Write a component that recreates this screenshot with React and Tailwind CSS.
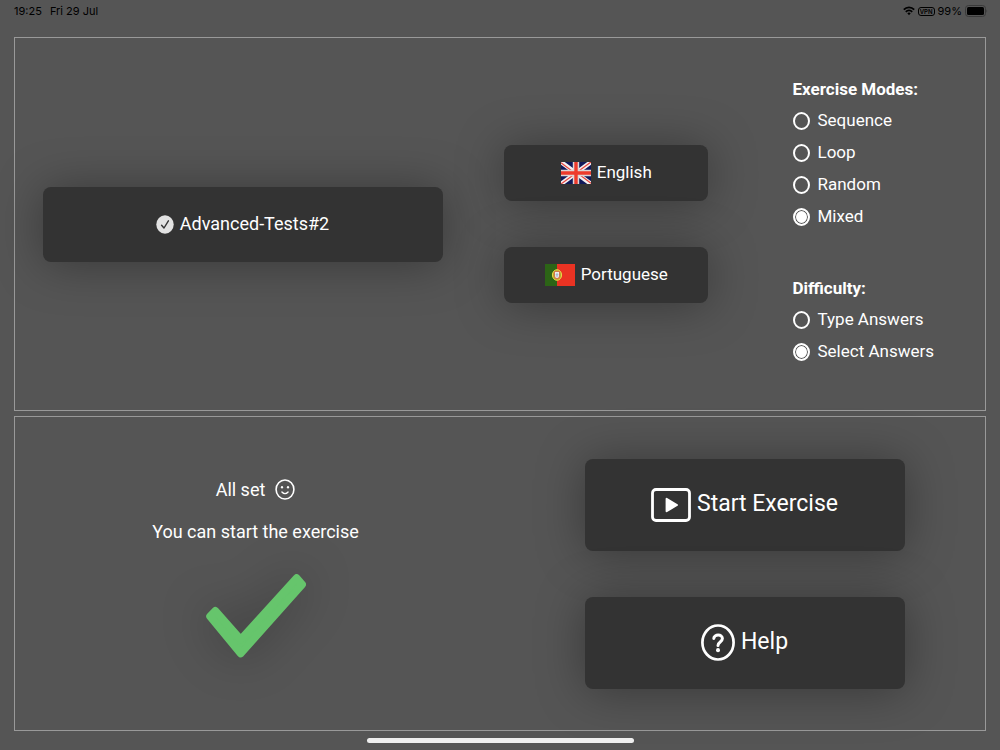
import React, { useState } from "react";

const MODES = ["Sequence", "Loop", "Random", "Mixed"];
const DIFFICULTIES = ["Type Answers", "Select Answers"];

const buttonStyle =
  "flex max-w-full items-center justify-center gap-[6px] rounded-lg bg-[#333333] shadow-[0_2px_48px_rgba(0,0,0,0.35)]";

function WifiIcon() {
  return (
    <svg width="12" height="10" viewBox="0 0 12 10" fill="none" stroke="#000" strokeWidth="1.8" aria-hidden="true">
      <path d="M0.8 3.6C3.7 0.6 8.3 0.6 11.2 3.6" />
      <path d="M2.8 5.8C4.6 4 7.4 4 9.2 5.8" />
      <path d="M4.3 7.3Q6 5.9 7.7 7.3L6 9.3Z" fill="#000" stroke="none" />
    </svg>
  );
}

function BatteryIcon() {
  return (
    <svg width="23" height="12" viewBox="0 0 23 12" aria-hidden="true">
      <rect x="0.5" y="0.5" width="20" height="11" rx="3" fill="none" stroke="#3a3a3a" />
      <rect x="2" y="2" width="17" height="8" rx="1.5" fill="#000" />
      <path d="M21.5 4.2Q23 6 21.5 7.8Z" fill="#3a3a3a" />
    </svg>
  );
}

function SelectedIcon() {
  return (
    <svg width="18" height="19" viewBox="0 0 18 19" aria-hidden="true">
      <ellipse cx="9" cy="9.5" rx="8.7" ry="9.3" fill="#e2e2e2" />
      <path d="M5.6 10.2L8 13L12.4 5.8" fill="none" stroke="#333" strokeWidth="1.4" strokeLinecap="round" strokeLinejoin="round" />
    </svg>
  );
}

function UkFlag() {
  return (
    <svg width="30" height="22" viewBox="0 0 30 22" aria-hidden="true">
      <rect width="30" height="22" fill="#10195a" />
      <path d="M0 0L30 22M30 0L0 22" stroke="#f4f0f0" strokeWidth="4.4" />
      <path d="M0 .8L13 10.4M30 21.2L17 11.6M30 0L17 9.6M0 22L13 12.4" stroke="#e8433c" strokeWidth="1.2" />
      <path d="M15 0V22M0 11H30" stroke="#ddd6d6" strokeWidth="6.4" />
      <path d="M15 0V22M0 11H30" stroke="#ee3b2c" strokeWidth="3.4" />
    </svg>
  );
}

function PortugalFlag() {
  return (
    <svg width="30" height="22" viewBox="0 0 30 22" aria-hidden="true">
      <rect width="30" height="22" fill="#ea3323" />
      <rect width="12" height="22" fill="#2c6416" />
      <ellipse cx="12" cy="11" rx="4.6" ry="5.3" fill="#b9a52d" stroke="#e9d84a" strokeWidth="1" />
      <path d="M9.2 7.3H14.8V11.8Q14.8 14.8 12 15Q9.2 14.8 9.2 11.8Z" fill="#dc6a58" />
      <path d="M10 8H14V12Q14 13.8 12 14Q10 13.8 10 12Z" fill="#eee" />
      <path d="M12 9V13M10.6 10.8H13.4" stroke="#8ba6c4" strokeWidth="0.8" />
    </svg>
  );
}

function SmileIcon() {
  return (
    <svg width="20" height="21" viewBox="0 0 20 21" aria-hidden="true">
      <ellipse cx="10" cy="10.5" rx="8.9" ry="9.5" fill="none" stroke="#fff" strokeWidth="1.6" />
      <ellipse cx="7" cy="8.2" rx="1.1" ry="1.3" fill="#fff" />
      <ellipse cx="13" cy="8.2" rx="1.1" ry="1.3" fill="#fff" />
      <path d="M6.9 13Q10 16.4 13.1 13" fill="none" stroke="#fff" strokeWidth="1.3" strokeLinecap="round" />
    </svg>
  );
}

function CheckMark() {
  return (
    <svg
      className="drop-shadow-[0_0_24px_rgba(0,0,0,0.35)]"
      width="100"
      height="84"
      viewBox="0 0 100 84"
      role="img"
      aria-label="Ready"
    >
      <path
        d="M9.3 36.8L4 42.4L34.7 79.6L96.2 10.4L90.6 4L34.7 65.6Z"
        fill="#66c56c"
        stroke="#66c56c"
        strokeWidth="7.6"
        strokeLinejoin="round"
      />
    </svg>
  );
}

function PlayIcon() {
  return (
    <svg width="40" height="34" viewBox="0 0 40 34" aria-hidden="true">
      <rect x="1.5" y="1.5" width="37" height="31" rx="3.5" fill="none" stroke="#fff" strokeWidth="2.8" />
      <path d="M15.6 10.8V23.2L26 17Z" fill="#fff" stroke="#fff" strokeWidth="2" strokeLinejoin="round" />
    </svg>
  );
}

function HelpIcon() {
  return (
    <svg width="34" height="37" viewBox="0 0 34 37" fill="none" stroke="#fff" aria-hidden="true">
      <ellipse cx="17" cy="18.5" rx="15.6" ry="17" strokeWidth="2.7" />
      <path d="M12.8 14.4C13 9.9 21.4 9.8 21.4 14.6C21.4 18 17 18 17 21.4" strokeWidth="3" strokeLinecap="round" />
      <ellipse cx="17" cy="26.2" rx="2" ry="2.1" fill="#fff" stroke="none" />
    </svg>
  );
}

function RadioGroup({ title, name, options, value, onChange }) {
  return (
    <fieldset>
      <legend className="h-8 text-[17px] leading-8 font-bold">{title}</legend>
      {options.map((option) => (
        <label key={option} className="flex h-8 items-center gap-2 text-[17px]">
          <input
            type="radio"
            name={name}
            checked={value === option}
            onChange={() => onChange(option)}
            className="h-[18px] w-[17px] shrink-0 appearance-none rounded-[50%] border-2 border-white checked:bg-white checked:shadow-[inset_0_0_0_1px_#555555]"
          />
          {option}
        </label>
      ))}
    </fieldset>
  );
}

function StatusBar() {
  return (
    <header className="flex h-[37px] items-start justify-between pt-[3px] pr-3 pl-[14px] font-[Inter,sans-serif] text-[11px] leading-4 text-black">
      <div className="flex gap-2">
        <span>19:25</span>
        <span>Fri 29 Jul</span>
      </div>
      <div className="flex h-4 items-center gap-[3px]">
        <WifiIcon />
        <span className="rounded-[3px] border border-black px-px text-[6px] leading-[7px] font-semibold">VPN</span>
        <span>99%</span>
        <BatteryIcon />
      </div>
    </header>
  );
}

function App() {
  const [mode, setMode] = useState("Mixed");
  const [difficulty, setDifficulty] = useState("Select Answers");

  return (
    <div className="flex min-h-screen flex-col bg-[#555555] font-[Roboto,sans-serif] text-white">
      <StatusBar />

      <main className="mx-[14px] grid flex-1 grid-rows-[374fr_315fr] gap-[5px]">
        {/* Exercise settings */}
        <section className="grid grid-cols-[456fr_273fr_243fr] items-center border border-[#999999]">
          <div className="flex justify-center">
            <button className={`${buttonStyle} h-[75px] w-[400px] text-lg`}>
              <SelectedIcon />
              Advanced-Tests#2
            </button>
          </div>

          <div className="flex flex-col items-center gap-[46px]">
            <button className={`${buttonStyle} h-14 w-[204px] text-[17px]`}>
              <UkFlag />
              English
            </button>
            <button className={`${buttonStyle} h-14 w-[204px] text-[17px]`}>
              <PortugalFlag />
              Portuguese
            </button>
          </div>

          <div className="flex flex-col gap-[39px] pb-2 pl-[50px]">
            <RadioGroup title="Exercise Modes:" name="mode" options={MODES} value={mode} onChange={setMode} />
            <RadioGroup
              title="Difficulty:"
              name="difficulty"
              options={DIFFICULTIES}
              value={difficulty}
              onChange={setDifficulty}
            />
          </div>
        </section>

        {/* Status and actions */}
        <section className="grid grid-cols-2 items-center border border-[#999999]">
          <div className="flex flex-col items-center pr-1 pb-[14px] text-lg">
            <p className="flex items-center gap-[10px]">
              All set
              <SmileIcon />
            </p>
            <p className="mt-[14px] mb-7">You can start the exercise</p>
            <CheckMark />
          </div>

          <div className="flex flex-col items-center gap-[46px] pl-1">
            <button className={`${buttonStyle} h-[92px] w-[320px] text-[23px]`}>
              <PlayIcon />
              Start Exercise
            </button>
            <button className={`${buttonStyle} h-[92px] w-[320px] text-[23px]`}>
              <HelpIcon />
              Help
            </button>
          </div>
        </section>
      </main>

      <footer className="flex h-[19px] items-center justify-center">
        <div className="h-[5px] w-[267px] rounded-full bg-[#eeeeee]" />
      </footer>
    </div>
  );
}

export default App;
